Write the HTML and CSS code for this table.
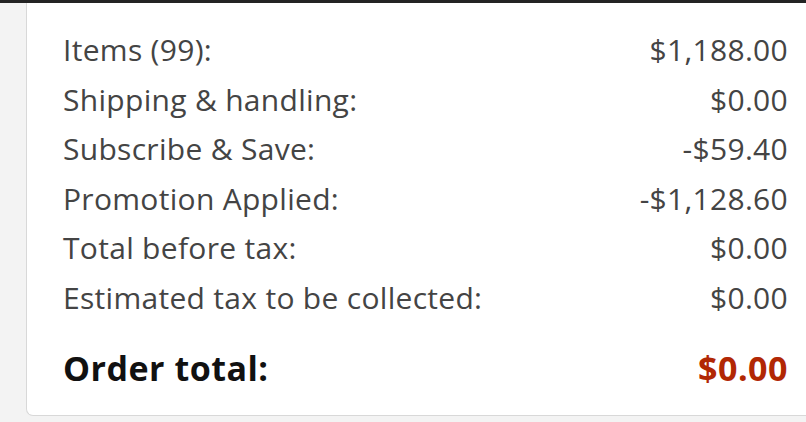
FILE: index.html
```html
<!DOCTYPE html>
<html>
<head>
<meta charset="utf-8">
<link rel="stylesheet" href="styles.css">
</head>
<body>
<div class="topbar"></div>
<div class="page">
  <div class="card">
    <div class="row"><span>Items (99):</span><span>$1,188.00</span></div>
    <div class="row"><span>Shipping &amp; handling:</span><span>$0.00</span></div>
    <div class="row"><span>Subscribe &amp; Save:</span><span>-$59.40</span></div>
    <div class="row"><span>Promotion Applied:</span><span>-$1,128.60</span></div>
    <div class="row"><span>Total before tax:</span><span>$0.00</span></div>
    <div class="row"><span>Estimated tax to be collected:</span><span>$0.00</span></div>
    <div class="row total"><span>Order total:</span><span class="price">$0.00</span></div>
  </div>
</div>
</body>
</html>
```
FILE: styles.css
```css
html, body {
  margin: 0;
  padding: 0;
  background: #f3f3f3;
  width: 806px;
  height: 422px;
  overflow: hidden;
}
.topbar {
  height: 3px;
  background: #232323;
}
.page {
  padding-left: 26px;
}
.card {
  background: #fff;
  border: 1px solid #d8d8d8;
  border-top: none;
  border-right: none;
  border-radius: 0 0 0 7px;
  height: 413px;
  box-sizing: border-box;
  padding: 22px 18px 0 36px;
  font-family: "Open Sans", sans-serif;
  color: #444;
}
.row {
  display: flex;
  justify-content: space-between;
  font-size: 30px;
  letter-spacing: 0.3px;
  line-height: 49.6px;
}
.total {
  margin-top: 21px;
  font-weight: 700;
  font-size: 34px;
  letter-spacing: 0.5px;
  color: #111;
}
.price {
  color: #b12704;
}
```
